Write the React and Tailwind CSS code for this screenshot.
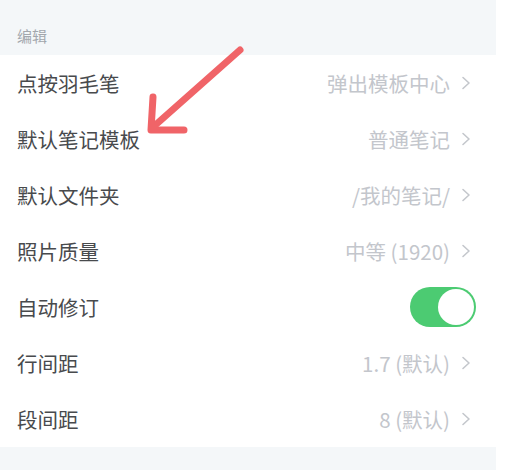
import React from "react";

const rows = [
  { label: "点按羽毛笔", value: "弹出模板中心" },
  { label: "默认笔记模板", value: "普通笔记" },
  { label: "默认文件夹", value: "/我的笔记/" },
  { label: "照片质量", value: "中等 (1920)" },
  { label: "自动修订", toggle: true },
  { label: "行间距", value: "1.7 (默认)" },
  { label: "段间距", value: "8 (默认)" },
];

const Chevron = () => (
  <svg width="10" height="14" viewBox="0 0 10 14" className="ml-[11px]">
    <polyline
      points="2,1.5 8,7 2,12.5"
      fill="none"
      stroke="#c4c7cc"
      strokeWidth="1.6"
      strokeLinecap="round"
      strokeLinejoin="round"
    />
  </svg>
);

const Toggle = () => (
  <div className="w-[66px] h-[40px] rounded-full bg-[#4ccb72] flex items-center justify-end pr-[2px]">
    <div className="w-[36px] h-[36px] rounded-full bg-white" />
  </div>
);

const Row = ({ label, value, toggle }) => (
  <div className="h-[56px] flex items-center justify-between pl-[17px] pr-[20px]">
    <span className="text-[20.5px] text-[#484a4d]">{label}</span>
    {toggle ? (
      <Toggle />
    ) : (
      <div className="flex items-center pr-[5px]">
        <span className="text-[20.5px] text-[#c3c6cc]">{value}</span>
        <Chevron />
      </div>
    )}
  </div>
);

export default function App() {
  return (
    <div
      className="relative w-[510px] h-[470px] bg-white overflow-hidden"
      style={{ fontFamily: '"Noto Sans CJK SC", "Noto Sans", sans-serif' }}
    >
      <div className="w-[496px]">
        {/* section header */}
        <div className="h-[55px] bg-[#f4f7f9] flex items-end pl-[17px] pb-[9px]">
          <span className="text-[15px] text-[#a3a7ad] leading-[20px]">编辑</span>
        </div>

        {rows.map((r) => (
          <Row key={r.label} {...r} />
        ))}

        <div className="h-[30px] bg-[#f4f7f9]" />
      </div>

      {/* annotation arrow */}
      <svg
        className="absolute left-0 top-0 pointer-events-none"
        width="510"
        height="470"
      >
        <g
          fill="none"
          stroke="#f06468"
          strokeWidth="7"
          strokeLinecap="round"
          strokeLinejoin="round"
        >
          <line x1="240" y1="50" x2="152" y2="128" />
          <polyline points="153,97 151,130 184,130" />
        </g>
      </svg>
    </div>
  );
}
